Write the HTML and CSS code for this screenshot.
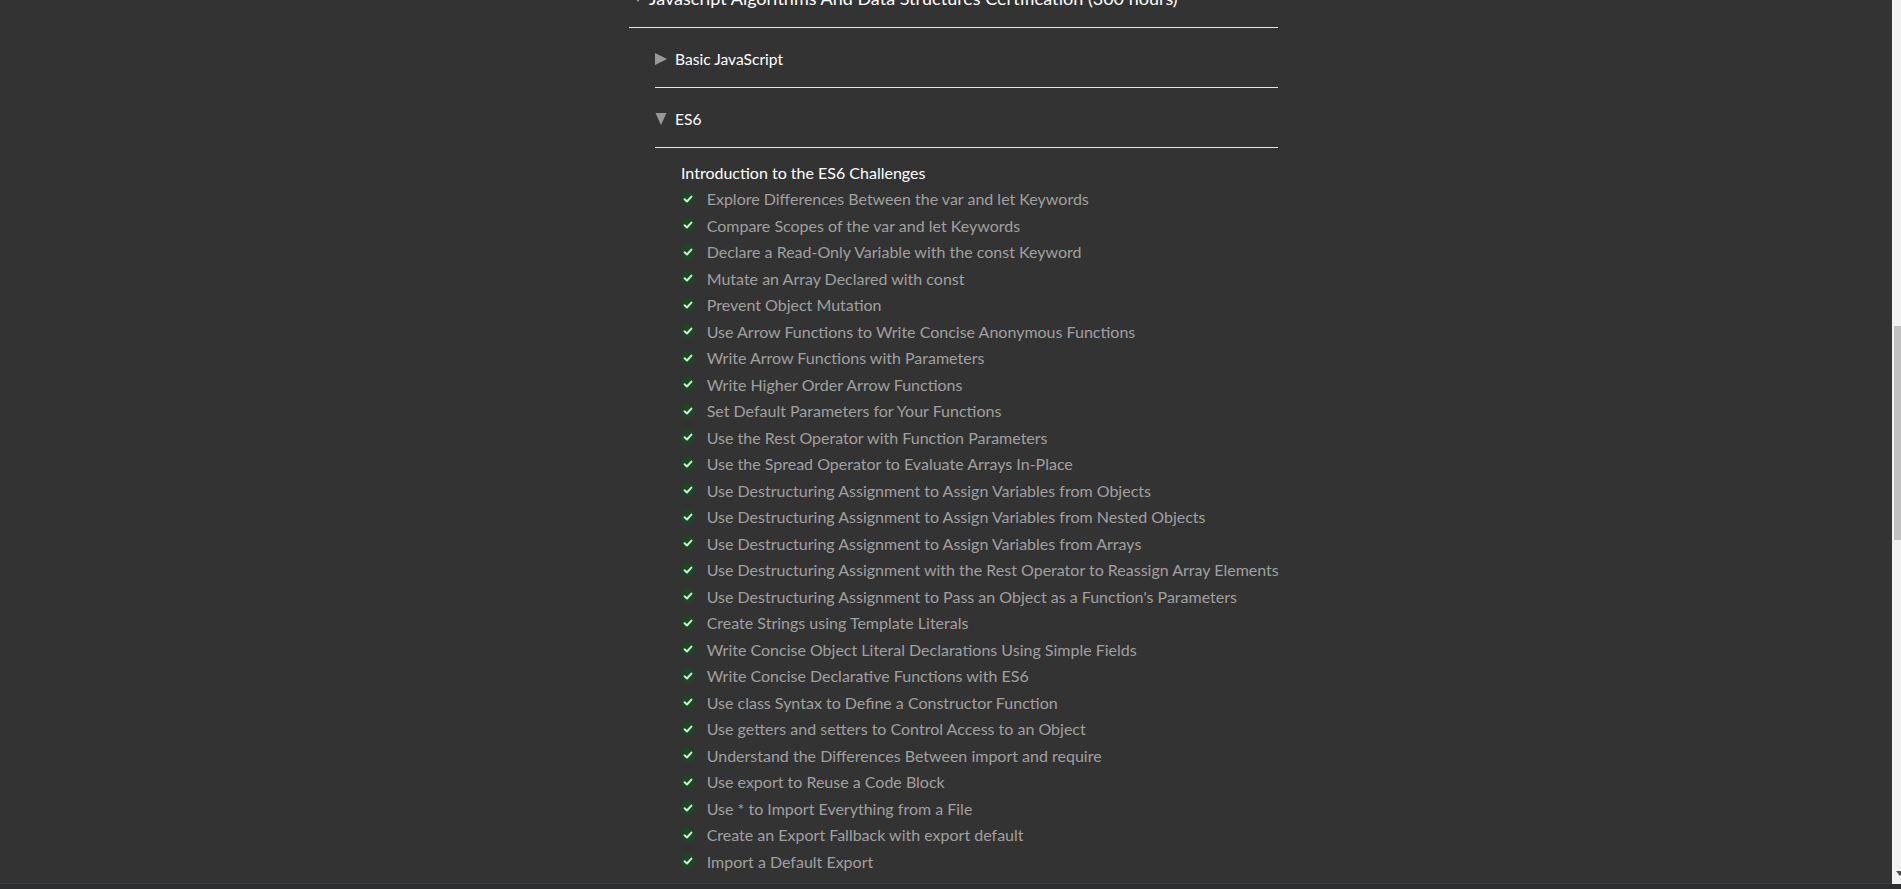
FILE: index.html
```html
<!DOCTYPE html>
<html lang="en">
<head>
<meta charset="utf-8">
<title>Map</title>
<link rel="stylesheet" href="styles.css">
</head>
<body>
<div class="page">
  <div class="cert">
    <div class="cert-head">
      <svg class="tri tri-cert" viewBox="0 0 12 12"><polygon points="0,1 12,1 6,11"/></svg>
      <span class="cert-name">Javascript Algorithms And Data Structures Certification (300 hours)</span>
    </div>
    <div class="block">
      <div class="block-head">
        <svg class="tri" viewBox="0 0 12 12"><polygon points="0,0 12,6 0,12"/></svg>
        <span class="block-name">Basic JavaScript</span>
      </div>
    </div>
    <div class="block">
      <div class="block-head">
        <svg class="tri" viewBox="0 0 12 12"><polygon points="0.5,0 11.5,0 6,12"/></svg>
        <span class="block-name">ES6</span>
      </div>
      <ul class="challenges">
        <li class="intro">Introduction to the ES6 Challenges</li>
        <li><svg class="check" viewBox="0 0 14 14"><circle cx="7" cy="7" r="7"/><path d="M3.6 7.2 L6 9.5 L10.4 4.6"/></svg><span>Explore Differences Between the var and let Keywords</span></li>
        <li><svg class="check" viewBox="0 0 14 14"><circle cx="7" cy="7" r="7"/><path d="M3.6 7.2 L6 9.5 L10.4 4.6"/></svg><span>Compare Scopes of the var and let Keywords</span></li>
        <li><svg class="check" viewBox="0 0 14 14"><circle cx="7" cy="7" r="7"/><path d="M3.6 7.2 L6 9.5 L10.4 4.6"/></svg><span>Declare a Read-Only Variable with the const Keyword</span></li>
        <li><svg class="check" viewBox="0 0 14 14"><circle cx="7" cy="7" r="7"/><path d="M3.6 7.2 L6 9.5 L10.4 4.6"/></svg><span>Mutate an Array Declared with const</span></li>
        <li><svg class="check" viewBox="0 0 14 14"><circle cx="7" cy="7" r="7"/><path d="M3.6 7.2 L6 9.5 L10.4 4.6"/></svg><span>Prevent Object Mutation</span></li>
        <li><svg class="check" viewBox="0 0 14 14"><circle cx="7" cy="7" r="7"/><path d="M3.6 7.2 L6 9.5 L10.4 4.6"/></svg><span>Use Arrow Functions to Write Concise Anonymous Functions</span></li>
        <li><svg class="check" viewBox="0 0 14 14"><circle cx="7" cy="7" r="7"/><path d="M3.6 7.2 L6 9.5 L10.4 4.6"/></svg><span>Write Arrow Functions with Parameters</span></li>
        <li><svg class="check" viewBox="0 0 14 14"><circle cx="7" cy="7" r="7"/><path d="M3.6 7.2 L6 9.5 L10.4 4.6"/></svg><span>Write Higher Order Arrow Functions</span></li>
        <li><svg class="check" viewBox="0 0 14 14"><circle cx="7" cy="7" r="7"/><path d="M3.6 7.2 L6 9.5 L10.4 4.6"/></svg><span>Set Default Parameters for Your Functions</span></li>
        <li><svg class="check" viewBox="0 0 14 14"><circle cx="7" cy="7" r="7"/><path d="M3.6 7.2 L6 9.5 L10.4 4.6"/></svg><span>Use the Rest Operator with Function Parameters</span></li>
        <li><svg class="check" viewBox="0 0 14 14"><circle cx="7" cy="7" r="7"/><path d="M3.6 7.2 L6 9.5 L10.4 4.6"/></svg><span>Use the Spread Operator to Evaluate Arrays In-Place</span></li>
        <li><svg class="check" viewBox="0 0 14 14"><circle cx="7" cy="7" r="7"/><path d="M3.6 7.2 L6 9.5 L10.4 4.6"/></svg><span>Use Destructuring Assignment to Assign Variables from Objects</span></li>
        <li><svg class="check" viewBox="0 0 14 14"><circle cx="7" cy="7" r="7"/><path d="M3.6 7.2 L6 9.5 L10.4 4.6"/></svg><span>Use Destructuring Assignment to Assign Variables from Nested Objects</span></li>
        <li><svg class="check" viewBox="0 0 14 14"><circle cx="7" cy="7" r="7"/><path d="M3.6 7.2 L6 9.5 L10.4 4.6"/></svg><span>Use Destructuring Assignment to Assign Variables from Arrays</span></li>
        <li><svg class="check" viewBox="0 0 14 14"><circle cx="7" cy="7" r="7"/><path d="M3.6 7.2 L6 9.5 L10.4 4.6"/></svg><span>Use Destructuring Assignment with the Rest Operator to Reassign Array Elements</span></li>
        <li><svg class="check" viewBox="0 0 14 14"><circle cx="7" cy="7" r="7"/><path d="M3.6 7.2 L6 9.5 L10.4 4.6"/></svg><span>Use Destructuring Assignment to Pass an Object as a Function's Parameters</span></li>
        <li><svg class="check" viewBox="0 0 14 14"><circle cx="7" cy="7" r="7"/><path d="M3.6 7.2 L6 9.5 L10.4 4.6"/></svg><span>Create Strings using Template Literals</span></li>
        <li><svg class="check" viewBox="0 0 14 14"><circle cx="7" cy="7" r="7"/><path d="M3.6 7.2 L6 9.5 L10.4 4.6"/></svg><span>Write Concise Object Literal Declarations Using Simple Fields</span></li>
        <li><svg class="check" viewBox="0 0 14 14"><circle cx="7" cy="7" r="7"/><path d="M3.6 7.2 L6 9.5 L10.4 4.6"/></svg><span>Write Concise Declarative Functions with ES6</span></li>
        <li><svg class="check" viewBox="0 0 14 14"><circle cx="7" cy="7" r="7"/><path d="M3.6 7.2 L6 9.5 L10.4 4.6"/></svg><span>Use class Syntax to Define a Constructor Function</span></li>
        <li><svg class="check" viewBox="0 0 14 14"><circle cx="7" cy="7" r="7"/><path d="M3.6 7.2 L6 9.5 L10.4 4.6"/></svg><span>Use getters and setters to Control Access to an Object</span></li>
        <li><svg class="check" viewBox="0 0 14 14"><circle cx="7" cy="7" r="7"/><path d="M3.6 7.2 L6 9.5 L10.4 4.6"/></svg><span>Understand the Differences Between import and require</span></li>
        <li><svg class="check" viewBox="0 0 14 14"><circle cx="7" cy="7" r="7"/><path d="M3.6 7.2 L6 9.5 L10.4 4.6"/></svg><span>Use export to Reuse a Code Block</span></li>
        <li><svg class="check" viewBox="0 0 14 14"><circle cx="7" cy="7" r="7"/><path d="M3.6 7.2 L6 9.5 L10.4 4.6"/></svg><span>Use * to Import Everything from a File</span></li>
        <li><svg class="check" viewBox="0 0 14 14"><circle cx="7" cy="7" r="7"/><path d="M3.6 7.2 L6 9.5 L10.4 4.6"/></svg><span>Create an Export Fallback with export default</span></li>
        <li><svg class="check" viewBox="0 0 14 14"><circle cx="7" cy="7" r="7"/><path d="M3.6 7.2 L6 9.5 L10.4 4.6"/></svg><span>Import a Default Export</span></li>
      </ul>
    </div>
  </div>
</div>
<div class="bottom-strip"></div>
<div class="scrollbar">
  <div class="scroll-thumb"></div>
  <svg class="scroll-arrow" viewBox="0 0 8 5"><polygon points="0,0 8,0 4,5"/></svg>
</div>
</body>
</html>
```
FILE: styles.css
```css
html, body {
  margin: 0;
  padding: 0;
  height: 889px;
  overflow: hidden;
}
body {
  background: #333333;
  font-family: Lato, "Open Sans", sans-serif;
  color: #ffffff;
}
.page {
  margin-left: 629px;
  width: 649px;
  margin-top: -14px;
}
.cert-head {
  display: flex;
  align-items: center;
  height: 42px;
  border-bottom: 1px solid #e6e6e6;
  box-sizing: border-box;
  padding-bottom: 18px;
}
.cert-name {
  font-size: 18px;
  line-height: 24px;
  margin-left: 6px;
}
.tri {
  width: 12px;
  height: 12px;
  fill: #999999;
  flex: none;
}
.tri-cert {
  width: 10px;
  height: 10px;
  margin-left: 4px;
}
.block {
  margin-left: 26px;
}
.block-head {
  display: flex;
  align-items: center;
  height: 60px;
  box-sizing: border-box;
  border-bottom: 1px solid #e6e6e6;
  padding-top: 2px;
}
.block-name {
  font-size: 15.6px;
  margin-left: 8px;
}
.challenges {
  list-style: none;
  margin: 11px 0 0 0;
  padding: 0 0 0 26px;
}
.challenges li {
  display: flex;
  align-items: center;
  height: 26.5px;
  font-size: 16px;
  color: #a0a0a0;
  white-space: nowrap;
}
.challenges li.intro {
  color: #ffffff;
}
.check {
  width: 14px;
  height: 14px;
  flex: none;
  margin-right: 11.7px;
}
.check circle {
  fill: #1b4823;
}
.check path {
  fill: none;
  stroke: #d8e4d8;
  stroke-width: 2;
  stroke-linecap: round;
  stroke-linejoin: round;
}
.bottom-strip {
  position: fixed;
  left: 0;
  right: 0;
  bottom: 0;
  height: 5px;
  background: #2c2e32;
  border-top: 1px solid #3d3d3d;
}
.scrollbar {
  position: fixed;
  top: 0;
  right: 0;
  width: 9px;
  height: 884px;
  background: #f1f1f1;
}
.scroll-thumb {
  position: absolute;
  top: 326px;
  left: 2px;
  right: 0;
  height: 214px;
  background: #c1c1c1;
}
.scroll-arrow {
  position: absolute;
  left: 4px;
  top: 871px;
  width: 8px;
  height: 5px;
  fill: #505050;
}
```
